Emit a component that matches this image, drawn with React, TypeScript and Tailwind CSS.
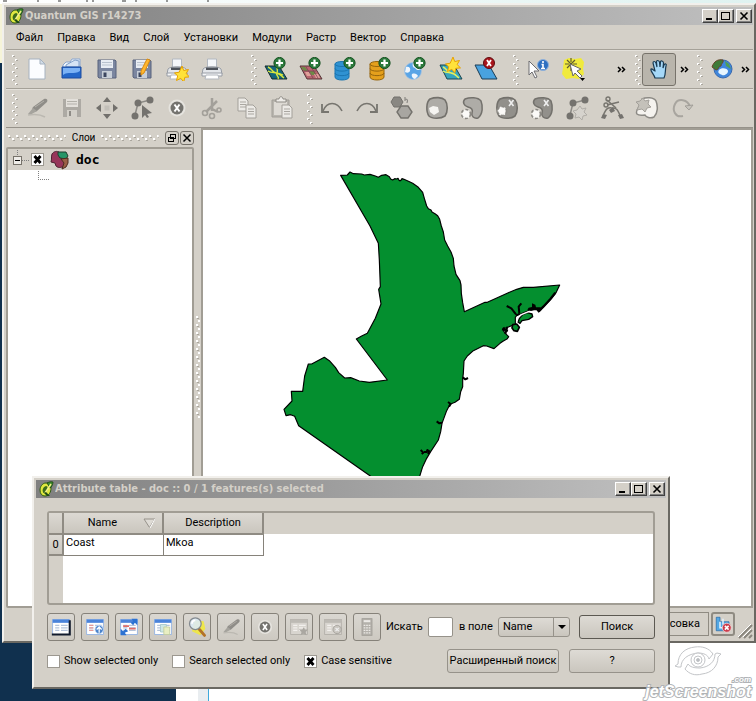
import type { ReactNode } from "react";

const menus = ["Файл", "Правка", "Вид", "Слой", "Установки", "Модули", "Растр", "Вектор", "Справка"];

const Icon = ({ children, size = "size-6" }: { children: ReactNode; size?: string }) => (
  <svg viewBox="0 0 24 24" className={size} aria-hidden="true">
    {children}
  </svg>
);

const Tool = ({ label, children }: { label: string; children: ReactNode }) => (
  <button aria-label={label} className="flex w-[35px] h-8 shrink-0 items-center justify-center">
    <Icon>{children}</Icon>
  </button>
);

const Handle = () => (
  <svg width="7" height="32" className="shrink-0" aria-hidden="true">
    {[0, 1, 2, 3, 4, 5, 6, 7].map((i) => (
      <g key={i}>
        <rect x={i % 2 ? 3 : 0} y={2 + i * 4} width="2" height="2" fill="#fff" />
        <rect x={i % 2 ? 4 : 1} y={3 + i * 4} width="2" height="1" fill="#aaa69e" />
      </g>
    ))}
  </svg>
);

const More = () => (
  <button aria-label="Ещё" className="flex w-[10px] h-8 shrink-0 items-center justify-center">
    <svg width="9" height="7" viewBox="0 0 9 7" fill="none" stroke="#000" strokeWidth="1.5" aria-hidden="true">
      <path d="M1 1l2.5 2.5L1 6M5 1l2.5 2.5L5 6" />
    </svg>
  </button>
);

/* small badges shared by the layer icons */
const Plus = () => (
  <g>
    <circle cx="15.500" cy="6" r="5.600" fill="#2c7a3c" stroke="#14501f" strokeWidth="1" />
    <path d="M15.500 2.500v7M12 6h7" stroke="#fff" strokeWidth="2.200" />
  </g>
);
const Star = ({ x = 0, y = 0 }: { x?: number; y?: number }) => (
  <path
    transform={`translate(${x} ${y})`}
    d="M6-1l1.700 4.500 4.800-1-2.400 4 3.400 3.400-4.700.4-1 4.700-3-3.700L.5 13.500l1.200-4.700L-1.500 6l4.700-.8z"
    fill="#ffe23a"
    stroke="#e8a200"
    strokeWidth="1"
  />
);
const Floppy = () => (
  <g>
    <path d="M3 3h17l1 1v17H4l-1-1z" fill="#7b86a0" stroke="#59637c" />
    <path d="M6 3h12v8H6z" fill="#e9edf3" />
    <path d="M7 5.500h10M7 8h10" stroke="#b9c2ce" />
    <path d="M7 14h10v7H7z" fill="#c8cfd8" />
    <path d="M8.500 15.500h3V20h-3z" fill="#3c4660" />
  </g>
);
const Printer = () => (
  <g>
    <path d="M7.500 2h9v9h-9z" fill="#f5f7fa" stroke="#b2b8c0" />
    <path d="M3 12c2-3 16-3 18 0l1 5H2z" fill="#e3e6ea" stroke="#989da5" />
    <path d="M6 10.500h12v2.500H6z" fill="#4d525a" />
    <path d="M2 16h20v3H2z" fill="#f5f6f8" stroke="#989da5" />
    <path d="M6 18h12l1 4H5z" fill="#fff" stroke="#b2b7be" />
  </g>
);
const Database = ({ fill, line }: { fill: string; line: string }) => (
  <g fill={fill} stroke={line} strokeWidth="1">
    <path d="M1 7v13c0 4 14 4 14 0V7z" />
    <ellipse cx="8" cy="7" rx="7" ry="2.500" />
    <path d="M1 11.500c0 3.500 14 3.500 14 0M1 16c0 3.500 14 3.500 14 0" fill="none" />
  </g>
);
const Globe = ({ x = 0, y = 0 }: { x?: number; y?: number }) => (
  <g transform={`translate(${x} ${y})`}>
    <circle cx="9" cy="9" r="8.500" fill="#5aa5e6" stroke="#a9c4de" strokeWidth=".8" />
    <path d="M2 5c3-1 5 1 4 4-1 2-3 2-5 1zM9 1c4 0 7 2 8 6-2 2-5 1-6-1-2 0-3-3-2-5zM8 12c3-1 5 0 6 2l-3 3c-2 0-4-3-3-5z" fill="#fff" opacity=".9" />
  </g>
);
const XMark = ({ x, y }: { x: number; y: number }) => (
  <path transform={`translate(${x} ${y})`} d="M0 0l4.500 6M4.500 0L0 6" stroke="#eee" strokeWidth="1.600" fill="none" />
);
const Gear = ({ x, y }: { x: number; y: number }) => (
  <g transform={`translate(${x} ${y})`}>
    <circle cx="0" cy="0" r="4.500" fill="#f5f4f1" stroke="#8b8984" strokeWidth="1.600" strokeDasharray="3 2" />
    <circle cx="0" cy="0" r="3" fill="#fbfaf8" />
  </g>
);
const Sheet = ({ x, y }: { x: number; y: number }) => (
  <g transform={`translate(${x} ${y})`}>
    <path d="M0 0h7l3 3v10H0z" fill="#eceae6" stroke="#a3a09a" />
    <path d="M2 4h6M2 6.500h6M2 9h6" stroke="#aaa7a1" />
  </g>
);
const Pencil = () => (
  <g>
    <path d="M8 11L19 3c3-1 4 1 3 3L12 15c-3 2-6-1-4-4z" fill="#8f8d88" />
    <path d="M8 12l4 3-7 4-2-1z" fill="#a5a39d" />
    <path d="M10 11l9-6" stroke="#b4b1aa" strokeWidth="1" />
    <path d="M3 19c6-1 12-1 17 2" stroke="#bbb8b1" strokeWidth="1.500" fill="none" />
  </g>
);
const CloseDot = () => (
  <g>
    <circle cx="12" cy="12" r="8.500" fill="#e6e4df" />
    <circle cx="12" cy="12" r="6.500" fill="#74736f" />
    <path d="M9.500 8.500l5 7M14.500 8.500l-5 7" stroke="#fff" strokeWidth="2" />
  </g>
);

const Logo = () => (
  <svg viewBox="0 0 16 16" className="size-4 shrink-0" aria-hidden="true">
    <path d="M8 2C4 2 2 6 2 9c0 4 2 6 5 6 4 0 6-4 6-8s-2-5-5-5z" fill="#dfe83f" stroke="#2c5a14" />
    <path d="M8 5C5 6 4 9 5 11c0 2 3 1 4-1s1-5-1-5z" fill="#3b6b1b" />
    <path d="M9 2c3-2 6-1 6-1s0 4-3 6z" fill="#3c8a2c" stroke="#1a4313" strokeWidth=".8" />
    <path d="M13 3L7 12" stroke="#f3f08a" strokeWidth="1.500" />
    <path d="M8 11l4 4h-3l-3-3z" fill="#1e4d12" />
  </svg>
);

const box =
  "flex h-[14px] w-4 items-center justify-center border border-[#404040] border-t-white border-l-white bg-[#d4d0c8] shadow-[inset_-1px_-1px_0_#808080]";

const WindowButtons = () => (
  <div className="flex shrink-0">
    <button aria-label="Свернуть" className={box}>
      <svg width="10" height="10"><path d="M1 8h6" stroke="#000" strokeWidth="2" /></svg>
    </button>
    <button aria-label="Развернуть" className={box}>
      <svg width="10" height="10" shapeRendering="crispEdges">
        <path d="M.5 1h8v7.500h-8zM0 1.500h9" fill="none" stroke="#000" />
      </svg>
    </button>
    <button aria-label="Закрыть" className={`${box} ml-[2px]`}>
      <svg width="10" height="10"><path d="M1.500 1.500l7 7M8.500 1.500l-7 7" stroke="#000" strokeWidth="1.600" /></svg>
    </button>
  </div>
);

const TitleBar = ({ title }: { title: string }) => (
  <header className="flex h-[18px] shrink-0 items-center gap-px bg-linear-to-r from-[#808080] to-[#c0c0c0] pr-px pl-[2px] text-[#d4d0c8]">
    <Logo />
    <h1 className="flex-1 truncate font-['DejaVu_Sans_Condensed','DejaVu_Sans',sans-serif] text-[11px] font-bold">
      {title}
    </h1>
    <WindowButtons />
  </header>
);

const Grip = () => (
  <svg className="h-[6px] min-w-0 flex-1" aria-hidden="true">
    <defs>
      <pattern id="grip" width="8" height="6" patternUnits="userSpaceOnUse">
        <path d="M0 0h2v2H0zM4 3h2v2H4z" fill="#fff" />
        <path d="M1 2h2v1H1zM5 5h2v1H5z" fill="#aaa69e" />
      </pattern>
    </defs>
    <rect width="100%" height="6" fill="url(#grip)" />
  </svg>
);

const Check = ({ label, checked, hidden }: { label: string; checked?: boolean; hidden?: boolean }) => (
  <label className="flex items-center gap-1 whitespace-nowrap">
    <span className="relative size-[13px] shrink-0">
      <input
        type="checkbox"
        defaultChecked={checked}
        aria-label={hidden ? label : undefined}
        className="peer block size-[13px] appearance-none border border-[#9c9890] bg-white"
      />
      <svg viewBox="0 0 13 13" className="pointer-events-none absolute inset-0 hidden size-[13px] peer-checked:block">
        <path d="M3.500 3l6 7M9.500 3l-6 7" stroke="#000" strokeWidth="2.800" />
      </svg>
    </span>
    {!hidden && label}
  </label>
);

const MainToolbar = () => (
  <div className="flex h-[39px] shrink-0 items-center border-t border-[#a5a198] pl-[6px] shadow-[inset_0_1px_0_#e4e1db]">
    <Handle />
    <Tool label="Новый проект">
      <path d="M4 2h11l5 5v15H4z" fill="#fcfdff" stroke="#a6b2c0" />
      <path d="M15 2v5h5z" fill="#d2dde8" stroke="#a6b2c0" />
    </Tool>
    <Tool label="Открыть проект">
      <path d="M3 8l3-3h4l2-3h8v18H3z" fill="#eef4fb" stroke="#8aa6cf" />
      <path d="M6 8l9-5 4 1v6H6z" fill="#d5e4f5" stroke="#7f9fc8" />
      <path d="M2 10h19v11H2z" fill="#2467c9" stroke="#1d4c9f" />
      <path d="M3 11h17v3c-6 4-12 0-17 4z" fill="#7bb2f5" />
    </Tool>
    <Tool label="Сохранить">
      <Floppy />
    </Tool>
    <Tool label="Сохранить как">
      <Floppy />
      <path d="M17 2l3 1-6 13-3 2 0-4z" fill="#ffb62e" stroke="#d98b10" />
    </Tool>
    <Tool label="Новая компоновка">
      <Printer />
      <Star x={11} y={10} />
    </Tool>
    <Tool label="Печать">
      <Printer />
    </Tool>
    <div className="w-[22px] shrink-0" />
    <Handle />
    <Tool label="Добавить векторный слой">
      <path d="M1 9h14l8 13H8z" fill="#15657b" stroke="#172d2d" />
      <path d="M4 10c5 2 3 5 8 6s5 3 8 5M13 10c0 4 1 3 0 6-2 3 3 3 1 6M4 14c4 3 8 0 15 4" stroke="#d9e63e" strokeWidth="1.400" fill="none" />
      <Plus />
    </Tool>
    <Tool label="Добавить растровый слой">
      <path d="M1 9h14l8 13H8z" fill="#b9656f" stroke="#543737" />
      <path d="M2 10h4l3 4H5zM10 14h5l3 4h-6z" fill="#6f8a47" />
      <path d="M6 15h4l3 4H8zM15 17h4l2 4h-4z" fill="#e0a29a" />
      <path d="M7 10l7 11M4 14h13M12 10l7 11" stroke="#7d3f57" strokeWidth=".8" />
      <Plus />
    </Tool>
    <Tool label="Добавить слой PostGIS">
      <Database fill="#2f92d2" line="#1b75b0" />
      <Plus />
    </Tool>
    <Tool label="Добавить слой SpatiaLite">
      <Database fill="#e5a01c" line="#96650d" />
      <Plus />
    </Tool>
    <Tool label="Добавить слой WMS">
      <Globe y={5} />
      <Plus />
    </Tool>
    <Tool label="Новый векторный слой">
      <path d="M1 8h14l8 14H8z" fill="#36a5bd" stroke="#1c444e" />
      <path d="M4 10c5 2 3 5 8 6s5 3 8 5M4 14c4 3 8 0 13 4" stroke="#e2f060" strokeWidth="1.500" fill="none" />
      <Star x={8} y={1} />
    </Tool>
    <Tool label="Удалить слой">
      <path d="M1 8h14l8 14H8z" fill="#49a2df" stroke="#1c3d54" />
      <circle cx="15" cy="6" r="5.500" fill="#a9141b" stroke="#5e0b0f" />
      <path d="M13 3l4 6M17 3l-4 6" stroke="#fff" strokeWidth="1.800" />
    </Tool>
    <div className="w-[10px] shrink-0" />
    <Handle />
    <Tool label="Определить объекты">
      <circle cx="17" cy="8" r="5.500" fill="#2f70c0" stroke="#8db0dc" />
      <path d="M17 4v2M15.500 7.500H17v4M15 11.500h4" stroke="#fff" strokeWidth="1.600" fill="none" />
      <path d="M3 4v14l3-3 3 6 2-1-3-6h5z" fill="#fff" stroke="#6c6c70" />
    </Tool>
    <Tool label="Выбрать объекты">
      <path d="M3 3l5-2 6 1 6-1 3 4-1 7 1 5-5 5-6-1-7 1-4-5 1-6z" fill="#f5ef24" opacity=".85" />
      <path d="M10 1v4M10 9v5M4 7h4M12 7h4M6 3l8 8M14 3l-8 8" stroke="#5f5c30" strokeWidth="1.200" />
      <path d="M9 7l3 12 2-3 5 5 2-2-5-5 4-2z" fill="#fff" stroke="#67676a" />
      <path d="M19 21h5l-2.500 3z" fill="#000" />
    </Tool>
    <div className="flex-1" />
    <More />
    <div className="w-[9px] shrink-0" />
    <Handle />
    <button aria-label="Прокрутка" className="flex h-[33px] w-[34px] shrink-0 items-center justify-center rounded-[3px] border border-[#77736b] bg-[#b9b5ac]">
      <Icon>
        <path d="M8 21c-1-4-5-7-4-9 1-1 3 2 4 2L6 6c0-2 2-2 3 0l1 4-.5-5c0-2 2-2 3 0l.5 5 .5-5c0-2 3-1 3 1l-.5 5 1-3c1-2 3-1 2 1-1 4 0 8-2 12z" fill="#a5d8f8" stroke="#193a52" strokeWidth="1.200" />
      </Icon>
    </button>
    <div className="w-[3px] shrink-0" />
    <More />
    <div className="w-[8px] shrink-0" />
    <Handle />
    <Tool label="Добавить из интернета">
      <g transform="translate(3 2)">
        <circle cx="10" cy="10" r="9" fill="#3f86dc" stroke="#3969ad" />
        <path d="M6 11c2-3 9-2 9 1s-4 5-6 4-5-2-3-5z" fill="#e6f5ff" />
        <path d="M-1 8C1 2 5 0 10 1c1 3-2 3-2 6-3 0-2 4-5 4z" fill="#3f7b39" stroke="#69462d" />
        <path d="M12 2l4 3 2 5-5-3z" fill="#4f9e57" />
      </g>
    </Tool>
    <div className="w-px shrink-0" />
    <More />
    <div className="w-[3px] shrink-0" />
  </div>
);

const DigitizeToolbar = () => (
  <div className="flex h-[39px] shrink-0 items-center border-t border-[#a5a198] pl-[6px] shadow-[inset_0_1px_0_#e4e1db]">
    <Handle />
    <Tool label="Режим редактирования">
      <Pencil />
    </Tool>
    <Tool label="Сохранить правки">
      <g opacity=".7">
        <path d="M3 3h18v18H3z" fill="#9d9b96" />
        <path d="M6 3h12v8H6z" fill="#eae8e4" />
        <path d="M7 5.500h10M7 8h10" stroke="#a6a49e" />
        <path d="M7 14h10v7H7z" fill="#d3d0ca" />
        <path d="M9 15h2v5H9z" fill="#716f6b" />
      </g>
    </Tool>
    <Tool label="Переместить объект">
      <path d="M12 1l4 5H8zM12 23l-4-5h8zM1 12l5-4v8zM23 12l-5 4V8z" fill="#72706c" />
      <path d="M9.500 9.500h5v5h-5z" fill="#c2bfb8" />
    </Tool>
    <Tool label="Правка узлов">
      <path d="M5 19L8 7l12-3" stroke="#8c8a85" strokeWidth="1.500" fill="none" />
      <circle cx="5" cy="20" r="3.500" fill="#74726e" />
      <circle cx="8" cy="7" r="3.500" fill="#74726e" />
      <circle cx="20" cy="4" r="3.500" fill="#74726e" />
      <path d="M12 9v13l3-3 2 3 2-1-2-3 5-1z" fill="#74726e" />
    </Tool>
    <Tool label="Удалить выделенное">
      <CloseDot />
    </Tool>
    <Tool label="Вырезать">
      <path d="M12 2v13M17 5L6 16M12 13l6 3" stroke="#a3a09a" strokeWidth="2.500" />
      <circle cx="5" cy="17" r="2.500" fill="none" stroke="#a3a09a" strokeWidth="1.600" />
      <circle cx="12" cy="20" r="2.500" fill="none" stroke="#a3a09a" strokeWidth="1.600" />
      <circle cx="19" cy="14" r="2" fill="none" stroke="#a3a09a" strokeWidth="1.600" />
    </Tool>
    <Tool label="Копировать">
      <Sheet x={3} y={2} />
      <Sheet x={11} y={9} />
    </Tool>
    <Tool label="Вставить">
      <path d="M2 4h17v17H2z" fill="#b9b6af" stroke="#a19e98" />
      <path d="M4 6h13v13H4z" fill="#dddad4" />
      <path d="M6 3h3c0-3 4-3 4 0h3v3H6z" fill="#eeece8" stroke="#8f8c86" />
      <Sheet x={12} y={9} />
    </Tool>
    <div className="w-2 shrink-0" />
    <Handle />
    <Tool label="Отменить">
      <path d="M3 15C7 5 17 5 22 15" stroke="#77756f" strokeWidth="1.600" fill="none" />
      <path d="M2 8v8h7" stroke="#77756f" strokeWidth="1.800" fill="none" />
    </Tool>
    <Tool label="Повторить">
      <path d="M2 15C7 5 17 5 21 15" stroke="#77756f" strokeWidth="1.600" fill="none" />
      <path d="M22 8v8h-7" stroke="#77756f" strokeWidth="1.800" fill="none" />
    </Tool>
    <Tool label="Упростить объект">
      <path d="M4 1h6l3 5-3 5H4L1 6z" fill="#898782" stroke="#73716c" />
      <path d="M11 10h7l4 6-4 6h-7l-4-6z" fill="#a8a6a1" stroke="#73716c" strokeWidth="1.400" />
      <path d="M15 1v4M15 3c4 0 2 3 2 4" stroke="#8c8a85" strokeWidth="1.200" fill="none" />
    </Tool>
    <Tool label="Добавить кольцо">
      <path d="M5 3c5-2 12-2 15 1 3 4 3 12 0 16-4 3-13 3-16 0C1 16 1 6 5 3z" fill="#aeaca7" stroke="#73716c" strokeWidth="1.600" />
      <path d="M8 10l5 1 1 5-5 3-4-3-1-4z" fill="#f5f4f1" />
    </Tool>
    <Tool label="Добавить часть">
      <path d="M5 3c5-2 13-2 16 2 2 5 2 13-3 17-4 1-7-2-6-5s0-5-4-6-6-5-3-8z" fill="#aeaca7" stroke="#73716c" strokeWidth="1.500" />
      <Gear x={6} y={18} />
    </Tool>
    <Tool label="Удалить кольцо">
      <path d="M5 3c5-2 12-2 15 1 3 4 3 12 0 16-4 3-13 3-16 0C1 16 1 6 5 3z" fill="#92908b" stroke="#73716c" strokeWidth="1.600" />
      <Gear x={7} y={15} />
      <XMark x={14} y={4} />
    </Tool>
    <Tool label="Удалить часть">
      <path d="M5 3c5-2 13-2 16 2 2 5 2 13-3 17-4 1-7-2-6-5s0-5-4-6-6-5-3-8z" fill="#92908b" stroke="#73716c" strokeWidth="1.500" />
      <Gear x={6} y={18} />
      <XMark x={14} y={4} />
    </Tool>
    <Tool label="Изменить форму">
      <path d="M5 19L8 7l12-3" stroke="#8c8a85" strokeWidth="1.500" fill="none" />
      <circle cx="5" cy="20" r="3.500" fill="#74726e" />
      <circle cx="8" cy="7" r="3.500" fill="#74726e" />
      <circle cx="20" cy="4" r="3.500" fill="#74726e" />
      <path d="M15 10l2 3 4-1-2 4 3 3-4 1-1 4-3-3-4 1 1-4-3-3 4-1z" fill="#d6d3cd" stroke="#b0ada7" />
    </Tool>
    <Tool label="Разбить объекты">
      <path d="M3 20C7 10 9 12 13 12c5 0 5 4 8 9" stroke="#77756f" strokeWidth="1.500" fill="none" />
      <path d="M7 9l12-3M7 4l9 8" stroke="#77756f" strokeWidth="1.600" />
      <circle cx="6" cy="9" r="2" fill="none" stroke="#77756f" strokeWidth="1.400" />
      <circle cx="8" cy="3" r="2" fill="none" stroke="#77756f" strokeWidth="1.400" />
      <path d="M1 22l2-4 4 1-2 4zM18 19l4-1 2 4-4 1zM9 14l4-3 2 4-4 2z" fill="#74726e" />
    </Tool>
    <Tool label="Объединить объекты">
      <path d="M7 3c4-2 12-2 14 2 2 5 2 12-2 16-4 2-8 0-9-2-3 0-6 1-8-1-2-3 1-5 3-9z" fill="#f5f3ef" stroke="#8c8a85" strokeWidth="1.500" />
      <path d="M8 2l2 3 4-1-1 4 3 3-4 1-2 4-3-3-5 1 2-5-3-3 4-1z" fill="#c4c1ba" stroke="#a3a09a" />
    </Tool>
    <Tool label="Повернуть символы">
      <path d="M13 20C5 22 2 14 5 8c3-6 13-5 15 3" stroke="#a8a59f" strokeWidth="2" fill="none" />
      <path d="M15 10l8-1-4 5z" fill="#c7c4bd" stroke="#a19e98" />
    </Tool>
  </div>
);

const LayersPanel = () => (
  <aside className="flex w-[188px] shrink-0 flex-col">
    <div className="flex h-[19px] shrink-0 items-center gap-[6px] pl-[2px]">
      <Grip />
      <h2 className="text-[10px]">Слои</h2>
      <Grip />
      <div className="flex gap-px">
        <button aria-label="Открепить" className="flex size-[14px] items-center justify-center rounded-[3px] border border-[#77736b]">
          <svg width="10" height="10" fill="none" stroke="#000" shapeRendering="crispEdges">
            <path d="M3.500 1.500h5v4h-5zM3 1h6M1.500 4.500h5v4h-5zM1 4h6" />
          </svg>
        </button>
        <button aria-label="Закрыть панель" className="flex size-[14px] items-center justify-center rounded-[3px] border border-[#77736b]">
          <svg width="10" height="10"><path d="M1.500 1.500l7 7M8.500 1.500l-7 7" stroke="#000" strokeWidth="1.500" /></svg>
        </button>
      </div>
    </div>
    <div className="flex-1 rounded-[2px] border-2 border-[#a19d94] bg-white">
      <div className="flex h-[21px] items-center bg-[#d4d0c8] pl-[5px]">
        <svg width="17" height="20" shapeRendering="crispEdges" aria-hidden="true">
          <path d="M4.500 0v6M9 10.500h8" stroke="#808080" strokeDasharray="1 1" />
          <rect x="0.500" y="6.500" width="8" height="8" fill="#eeece8" stroke="#77736b" />
          <path d="M2 10.500h5" stroke="#000" />
        </svg>
        <span className="ml-px">
          <Check label="doc" checked hidden />
        </span>
        <svg width="20" height="20" viewBox="0 0 20 20" className="ml-[6px]" aria-hidden="true">
          <path d="M2 4c2-3 5-3 7-2l2 6 4 4-1 4c-3 2-6 2-8 0l-1-3-4-1c1-3 0-5 1-8z" fill="#97355a" stroke="#4c2130" />
          <path d="M8 2h8l2 4-2 3-6-1-2-3z" fill="#259567" stroke="#1d3f2c" />
          <path d="M11 9l7-1v5l-2 4-4 2 2-6z" fill="#9b6046" stroke="#4c2b20" />
        </svg>
        <span className="ml-[6px] font-['DejaVu_Sans_Mono',monospace] text-[13px] font-bold">doc</span>
      </div>
      <svg width="46" height="12" shapeRendering="crispEdges" aria-hidden="true">
        <path d="M30.500 1v8M30 9.500h11" fill="none" stroke="#808080" strokeDasharray="1 1" />
      </svg>
    </div>
  </aside>
);

const Region = () => (
  <svg viewBox="0 0 900 960" className="mt-[30px] ml-[67px] h-[320px] w-[300px]" role="img" aria-label="Coast">
    <g strokeLinejoin="round">
      <path
        d="M212 46L232 45 240 36 250 41 275 42 283 45 300 43 316 48 325 52 335 46 348 44 358 50 362 57 368 60 374 56 380 57 384 55 388 62 392 62 396 56 402 58 412 62 428 70 445 82 458 97 463 115 470 138 475 146 483 150 486 156 495 161 503 167 509 178 514 198 520 216 524 240 533 258 543 276 550 295 552 318 558 343 570 362 573 375 574 400 578 428 583 455 645 427 652 427 715 398 740 388 760 382 790 382 869 375 858 398 840 420 806 455 800 448 786 450 775 452 750 463 740 466 736 472 736 490 738 496 730 495 705 505 700 512 706 520 716 530 712 536 700 543 690 550 672 566 650 558 640 557 610 572 592 588 582 603 580 640 578 656 578 680 572 695 568 718 555 727 540 733 530 752 516 790 512 815 505 840 482 875 470 895 458 920 444 965 320 965 302 949 86 797 74 769 62 764 48 767 42 748 66 723 64 694 98 694 104 648 115 612 125 612 163 592 178 602 196 622 206 638 224 654 242 653 268 663 298 667 352 660 259 537 275 528 292 520 316 475 333 432 326 388 331 380 328 300 325 250 300 198z"
        fill="#048f2f"
        stroke="#000"
        strokeWidth="3.500"
      />
      <path
        d="M710 438l14 7 14 18M754 430l-8 10 2 20M738 466l12-4M578 652l8 6 8-4M534 726l8 6-5 8M500 784l8 6 8-2M452 870l8 8-5 4M462 876h8l2-6 6 4-4 8M696 508l18 4M700 502l10 14M712 500l-6 22"
        fill="none"
        stroke="#000"
        strokeWidth="6"
      />
      <path d="M786 430l10 4 2 8 14 0 2 8-8 8-8-10-14 4-12-3 4-6 10-2z" fill="#000" />
      <path d="M856 398l-14 18-22 24-14 14" fill="none" stroke="#000" strokeWidth="7" />
      <path d="M748 476l10-12 14-6 14 4 2 8-12 8-20 4-6 8-6-4z" fill="#048f2f" stroke="#000" strokeWidth="4" />
      <path d="M728 494l12-2 8 10-6 12-10-2-6-8z" fill="#048f2f" stroke="#000" strokeWidth="5" />
      <path d="M740 486l2-14 12-8 24-10 8 2" fill="none" stroke="#fff" strokeWidth="4" />
    </g>
  </svg>
);

const MainWindow = () => (
  <main className="flex min-h-0 flex-1 flex-col border-2 border-[#6a6862] border-t-[#f2f0ec] border-l-[#f2f0ec] bg-[#d4d0c8] p-[2px] pr-px">
    <TitleBar title="Quantum GIS r14273" />
    <nav className="flex h-6 shrink-0 items-center gap-[14px] pt-[2px] pl-[10px]">
      {menus.map((m) => (
        <button key={m}>{m}</button>
      ))}
    </nav>
    <MainToolbar />
    <DigitizeToolbar />
    <div className="flex min-h-0 flex-1 border-t border-[#96928a]">
      <LayersPanel />
      <div className="flex w-[7px] shrink-0 items-center pl-[2px]">
        <svg width="4" height="104" aria-hidden="true">
          <defs>
            <pattern id="split" width="4" height="8" patternUnits="userSpaceOnUse">
              <path d="M0 0h2v2H0zM2 4h2v2H2z" fill="#fff" />
              <path d="M1 2h2v1H1z" fill="#aaa69e" />
            </pattern>
          </defs>
          <rect width="4" height="104" fill="url(#split)" />
        </svg>
      </div>
      <div className="flex-1 overflow-hidden border-2 border-[#a19d94] bg-white">
        <Region />
      </div>
    </div>
    <footer className="flex h-[31px] shrink-0 items-center justify-end gap-[2px]">
      <button className="h-6 border border-[#8f8b82] px-2">Отрисовка</button>
      <button aria-label="Проекция" className="flex size-6 items-center justify-center rounded-[3px] border-2 border-[#8f8b82]">
        <Icon size="size-[18px]">
          <path d="M3 3v18h17V9H8V3z" fill="#52a8e5" stroke="#2b6ca8" />
          <path d="M8 9v8h8M12 5v8" stroke="#e3f3ff" strokeWidth="2" fill="none" />
          <circle cx="17" cy="17" r="6" fill="#cb3b4b" stroke="#f3dcdc" />
          <path d="M14.500 14.500l5 5M19.500 14.500l-5 5" stroke="#fff" strokeWidth="2" />
        </Icon>
      </button>
      <svg width="16" height="16" className="self-end" aria-hidden="true">
        <path d="M2 15L15 2M7 15l8-8M12 15l3-3" stroke="#8a867d" strokeWidth="2" />
        <path d="M1 14L14 1M6 14l8-8" stroke="#fff" strokeWidth="1" />
      </svg>
    </footer>
  </main>
);

const TableArt = ({ gray }: { gray?: boolean }) => (
  <g>
    <rect x="2" y="3" width="20" height="18" fill={gray ? "#d8d5cf" : "#fff"} stroke={gray ? "#b0ada7" : "#8fb0e4"} />
    <rect x="2" y="3" width="20" height="4" fill={gray ? "#bdbab4" : "#4a83da"} />
    <path d="M5 10h5M12 10h8M5 13h5M12 13h8M5 16h5M12 16h8" stroke={gray ? "#f2f0ed" : "#b4c3da"} strokeWidth="1.500" />
  </g>
);

const dialogTools: { label: string; art: ReactNode }[] = [
  { label: "Снять выделение", art: <g><TableArt /><path d="M1 21h21.500V4" stroke="#111a2c" strokeWidth="2.500" fill="none" /></g> },
  {
    label: "Переместить выделенное в начало",
    art: (
      <g>
        <TableArt />
        <path d="M5 10h5M5 13h5M5 16h5" stroke="#e79a97" strokeWidth="1.500" />
        <circle cx="17" cy="15" r="5" fill="#4a83cc" stroke="#cfe0f5" />
        <path d="M17 19v-6M14 15l3-3 3 3" stroke="#fff" strokeWidth="1.500" fill="none" />
      </g>
    ),
  },
  {
    label: "Обратить выделение",
    art: (
      <g>
        <TableArt />
        <path d="M5 11h7M12 14h8" stroke="#df6d69" strokeWidth="2" />
        <path d="M2 14v8h7l-2-3 4-2-3-3-3 3zM22 10V2h-7l2 3-3 2 3 3 2-3z" fill="#2c72d2" />
      </g>
    ),
  },
  {
    label: "Копировать выделенное",
    art: (
      <g>
        <TableArt />
        <path d="M9 9h7v9H9z" fill="#cfe8e4" stroke="#a6c8cb" />
        <path d="M13 12h7v9h-7z" fill="#e9efc2" stroke="#c3cc9c" />
      </g>
    ),
  },
  {
    label: "Увеличить карту",
    art: (
      <g>
        <path d="M9 4l11 1 2 9-6 8-10-5z" fill="#f5ec2c" opacity=".8" />
        <path d="M15 15l6 7" stroke="#b47328" strokeWidth="3.500" strokeLinecap="round" />
        <circle cx="10" cy="8" r="7" fill="#dceaf4" fillOpacity=".9" stroke="#83898f" strokeWidth="1.500" />
        <path d="M6 8c0-3 2-4 4-4" stroke="#fff" strokeWidth="2" fill="none" />
      </g>
    ),
  },
  { label: "Режим редактирования", art: <Pencil /> },
  { label: "Удалить выделенные", art: <CloseDot /> },
  { label: "Новый столбец", art: <g><TableArt gray /><path d="M18 12l1 3 4 0-3 3 1 4-4-2-3 2 1-4-3-3h4z" fill="#aaa7a1" /></g> },
  { label: "Удалить столбец", art: <g><TableArt gray /><circle cx="17" cy="15" r="5" fill="#c8c5bf" stroke="#a19e98" /><path d="M15 13l4 4M19 13l-4 4" stroke="#eee" strokeWidth="1.500" /></g> },
  {
    label: "Калькулятор полей",
    art: (
      <g>
        <rect x="6" y="2" width="12" height="20" fill="#b4b1ab" stroke="#9f9c96" />
        <path d="M8 5h8" stroke="#eceae6" strokeWidth="2.500" />
        <path d="M8 10h8M8 13h8M8 16h8M8 19h8" stroke="#eceae6" strokeWidth="1.500" strokeDasharray="2 1" />
      </g>
    ),
  },
];

const push =
  "h-6 shrink-0 whitespace-nowrap rounded-[3px] border bg-linear-to-b from-[#dedbd5] to-[#cac6be]";
const head = "border-r-2 border-b-2 border-[#8f8b83] bg-linear-to-b from-[#dcd9d3] to-[#cac6be] font-normal";

const AttributeDialog = () => (
  <section className="absolute top-[476px] right-[86px] left-8 border-2 border-[#6a6862] border-t-[#f2f0ec] border-l-[#f2f0ec] bg-[#d4d0c8] p-[2px]">
    <TitleBar title="Attribute table - doc :: 0 / 1 features(s) selected" />
    <div className="flex flex-col gap-2 px-[11px] pt-[13px] pb-3">
      <div className="h-[94px] rounded-[3px] border-2 border-[#a19d94] bg-[linear-gradient(#d4d0c8,#d4d0c8),linear-gradient(#d4d0c8,#d4d0c8)] bg-white bg-[length:100%_21px,14px_100%] bg-no-repeat">
        <table className="border-separate border-spacing-0">
          <thead>
            <tr className="h-[22px]">
              <th className={`${head} w-[15px]`} aria-label="№" />
              <th className={`${head} w-[100px]`}>
                <span className="flex items-center justify-end gap-[26px] pr-[6px]">
                  Name
                  <svg width="13" height="11" aria-hidden="true">
                    <path d="M1 1h11L6.500 9.500z" fill="#dedbd5" stroke="#96928a" />
                    <path d="M7 10l5-9" stroke="#fff" />
                  </svg>
                </span>
              </th>
              <th className={`${head} w-[100px]`}>Description</th>
            </tr>
          </thead>
          <tbody>
            <tr className="h-[19px]">
              <th className={head}>0</th>
              <td className="border-r border-b border-[#86827a] bg-white pb-1 pl-[2px]">Coast</td>
              <td className="border-r border-b border-[#86827a] bg-white pb-1 pl-[2px]">Mkoa</td>
            </tr>
          </tbody>
        </table>
      </div>
      <div className="flex items-center">
        <div className="flex gap-[6px]">
          {dialogTools.map((t) => (
            <button
              key={t.label}
              aria-label={t.label}
              className="flex size-7 shrink-0 items-center justify-center rounded-[3px] border border-[#86827a] bg-linear-to-b from-[#dad7d1] to-[#cdc9c1]"
            >
              <Icon size="size-5">{t.art}</Icon>
            </button>
          ))}
        </div>
        <label htmlFor="query" className="ml-[5px] w-[42px] shrink-0 whitespace-nowrap">Искать</label>
        <input id="query" className="h-5 w-[25px] shrink-0 rounded-[2px] border border-[#96928a] bg-white" />
        <label htmlFor="field" className="ml-[6px] w-[39px] shrink-0 whitespace-nowrap">в поле</label>
        <div className="relative w-[72px] shrink-0">
          <select id="field" className="block h-5 w-full appearance-none rounded-[3px] border border-[#96928a] bg-linear-to-b from-[#dedbd5] to-[#cac6be] pl-1">
            <option>Name</option>
          </select>
          <span className="pointer-events-none absolute inset-y-px right-px flex w-4 items-center justify-center border-l border-[#96928a]">
            <svg width="8" height="4"><path d="M0 0h8L4 4z" /></svg>
          </span>
        </div>
        <div className="flex-1" />
        <button className={`${push} w-[76px] border-[#5c5952]`}>Поиск</button>
      </div>
      <div className="flex items-center gap-[10px]">
        <div className="flex flex-1 gap-[14px]">
          <Check label="Show selected only" />
          <Check label="Search selected only" />
          <Check label="Case sensitive" checked />
        </div>
        <button className={`${push} w-[112px] border-[#96928a]`}>Расширенный поиск</button>
        <button className={`${push} w-[86px] border-[#96928a]`}>?</button>
      </div>
    </div>
  </section>
);

const Watermark = () => (
  <div className="absolute right-[5px] bottom-px flex w-[106px] flex-col items-center">
    <svg width="50" height="30" viewBox="0 0 50 30" fill="#fff" stroke="#c3c5c8" aria-hidden="true">
      <path d="M2 20l3 1 3 0C8 13 15 8 25 7c6 0 10 2 11 6l4-5C36 2 29 0 22 1 12 2 5 8 5 18z" />
      <path d="M48 8l-4-1-2 1c0 8-6 13-15 14-6 0-10-1-12-4l-3 5c4 5 10 7 17 5 10-1 16-8 16-17z" />
      <circle cx="25" cy="14" r="7" />
      <circle cx="25" cy="14" r="4" />
      <circle cx="25" cy="14" r="1.500" fill="#b9bcc0" />
    </svg>
    <div className="flex w-full flex-col items-end font-['Liberation_Sans',sans-serif] font-bold text-white italic [paint-order:stroke] [-webkit-text-stroke:2px_#b0b3b6]">
      <span className="text-[8px] leading-[8px]">.com</span>
      <span className="text-base leading-4">jetScreenshot</span>
    </div>
  </div>
);

export default function App() {
  return (
    <div className="relative flex h-screen flex-col overflow-hidden bg-[#10304e] font-['Roboto',sans-serif] text-[11px] leading-4 text-black">
      {/* slices of the windows behind */}
      <div className="absolute inset-x-0 top-0 h-[63px] bg-[#f6f4d8]">
        <div className="h-1 bg-linear-to-r from-white to-[#dff2f0]">
          <svg width="230" height="3" aria-hidden="true">
            <path d="M3 1h4M37 1h2M58 1h3M86 1h2M92 1h2M122 1h4M135 1h2M166 1h2M207 1h2" stroke="#333" />
          </svg>
        </div>
      </div>
      <div className="absolute right-0 bottom-0 left-[176px] h-[70px] bg-white">
        <div className="ml-[22px] h-full w-[11px] border-r border-[#3fa9dc] bg-[#e9edf0]" />
      </div>
      <div className="relative flex min-h-0 flex-1 flex-col pt-[3px] pb-[58px] pl-[2px]">
        <MainWindow />
      </div>
      <AttributeDialog />
      <Watermark />
    </div>
  );
}
